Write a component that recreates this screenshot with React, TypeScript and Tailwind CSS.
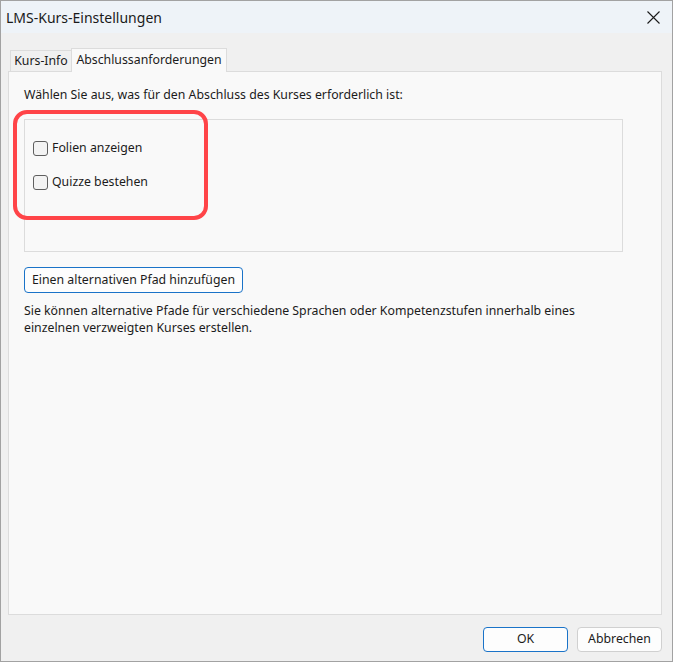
import React from 'react';

const font = { fontFamily: '"Noto Sans", "Open Sans", sans-serif' };

const Checkbox = ({ label }: { label: string }) => (
  <label className="flex items-center h-[15px]">
    <span className="w-[15px] h-[15px] rounded-[3px] border border-[#5f5f5f] bg-[#f3f3f3] shrink-0" />
    <span className="ml-[4px] text-[12.3px] text-[#1b1b1b]">{label}</span>
  </label>
);

const App = () => {
  return (
    <div
      className="w-[673px] h-[662px] border border-[#a2a2a2] bg-[#f0f0f0] flex flex-col text-[#1b1b1b] overflow-hidden"
      style={font}
    >
      {/* title bar */}
      <div className="h-[32px] bg-[#eef3f8] flex items-center justify-between pl-[5px] pr-[12px] shrink-0">
        <span className="text-[14px] text-[#1a1a1a]">LMS-Kurs-Einstellungen</span>
        <svg width="13" height="13" viewBox="0 0 13 13" className="text-[#1a1a1a]">
          <path d="M0.5 0.5L12.5 12.5M12.5 0.5L0.5 12.5" stroke="currentColor" strokeWidth="1.1" fill="none" />
        </svg>
      </div>

      {/* body */}
      <div className="flex-1 flex flex-col pl-[7px] pr-[10px] pt-[15px]">
        {/* tabs */}
        <div className="flex items-end pl-[2px] h-[23px] relative z-10">
          <div className="w-[62px] h-[21px] border border-b-0 border-[#dcdcdc] bg-[#f0f0f0] flex items-center justify-center text-[12.3px]">
            Kurs-Info
          </div>
          <div className="w-[156px] h-[24px] border border-b-0 border-[#dcdcdc] bg-[#f9f9f9] flex items-center justify-center text-[12.3px] -ml-px -mb-px">
            Abschlussanforderungen
          </div>
        </div>

        {/* panel */}
        <div className="h-[544px] border border-[#dcdcdc] bg-[#f9f9f9] pl-[15px] pt-[14px] relative">
          <p className="text-[12.3px] leading-[17px]">Wählen Sie aus, was für den Abschluss des Kurses erforderlich ist:</p>

          <div className="mt-[16px] w-[599px] h-[133px] border border-[#dcdcdc] flex flex-col gap-[19px] pt-[21px] pl-[8px]">
            <Checkbox label="Folien anzeigen" />
            <Checkbox label="Quizze bestehen" />
          </div>

          <button className="mt-[15px] w-[219px] h-[26px] border border-[#1a73c8] rounded-[4px] bg-[#fdfdfd] text-[12.3px] flex items-center justify-center">
            Einen alternativen Pfad hinzufügen
          </button>

          <p className="mt-[9px] text-[12.3px] leading-[17px] w-[570px]">
            Sie können alternative Pfade für verschiedene Sprachen oder Kompetenzstufen innerhalb eines einzelnen verzweigten Kurses erstellen.
          </p>

          {/* highlight */}
          <div className="absolute left-[4px] top-[38px] w-[195px] h-[110px] border-[4.5px] border-[#ff4448] rounded-[14px] pointer-events-none" />
        </div>

        {/* footer */}
        <div className="flex justify-end gap-[9px] pt-[12px]">
          <button className="w-[85px] h-[25px] border border-[#1a73c8] rounded-[4px] bg-[#fdfdfd] text-[12.3px]">OK</button>
          <button className="w-[85px] h-[25px] border border-[#d0d0d0] rounded-[4px] bg-[#fdfdfd] text-[12.3px]">Abbrechen</button>
        </div>
      </div>
    </div>
  );
};

export default App;
